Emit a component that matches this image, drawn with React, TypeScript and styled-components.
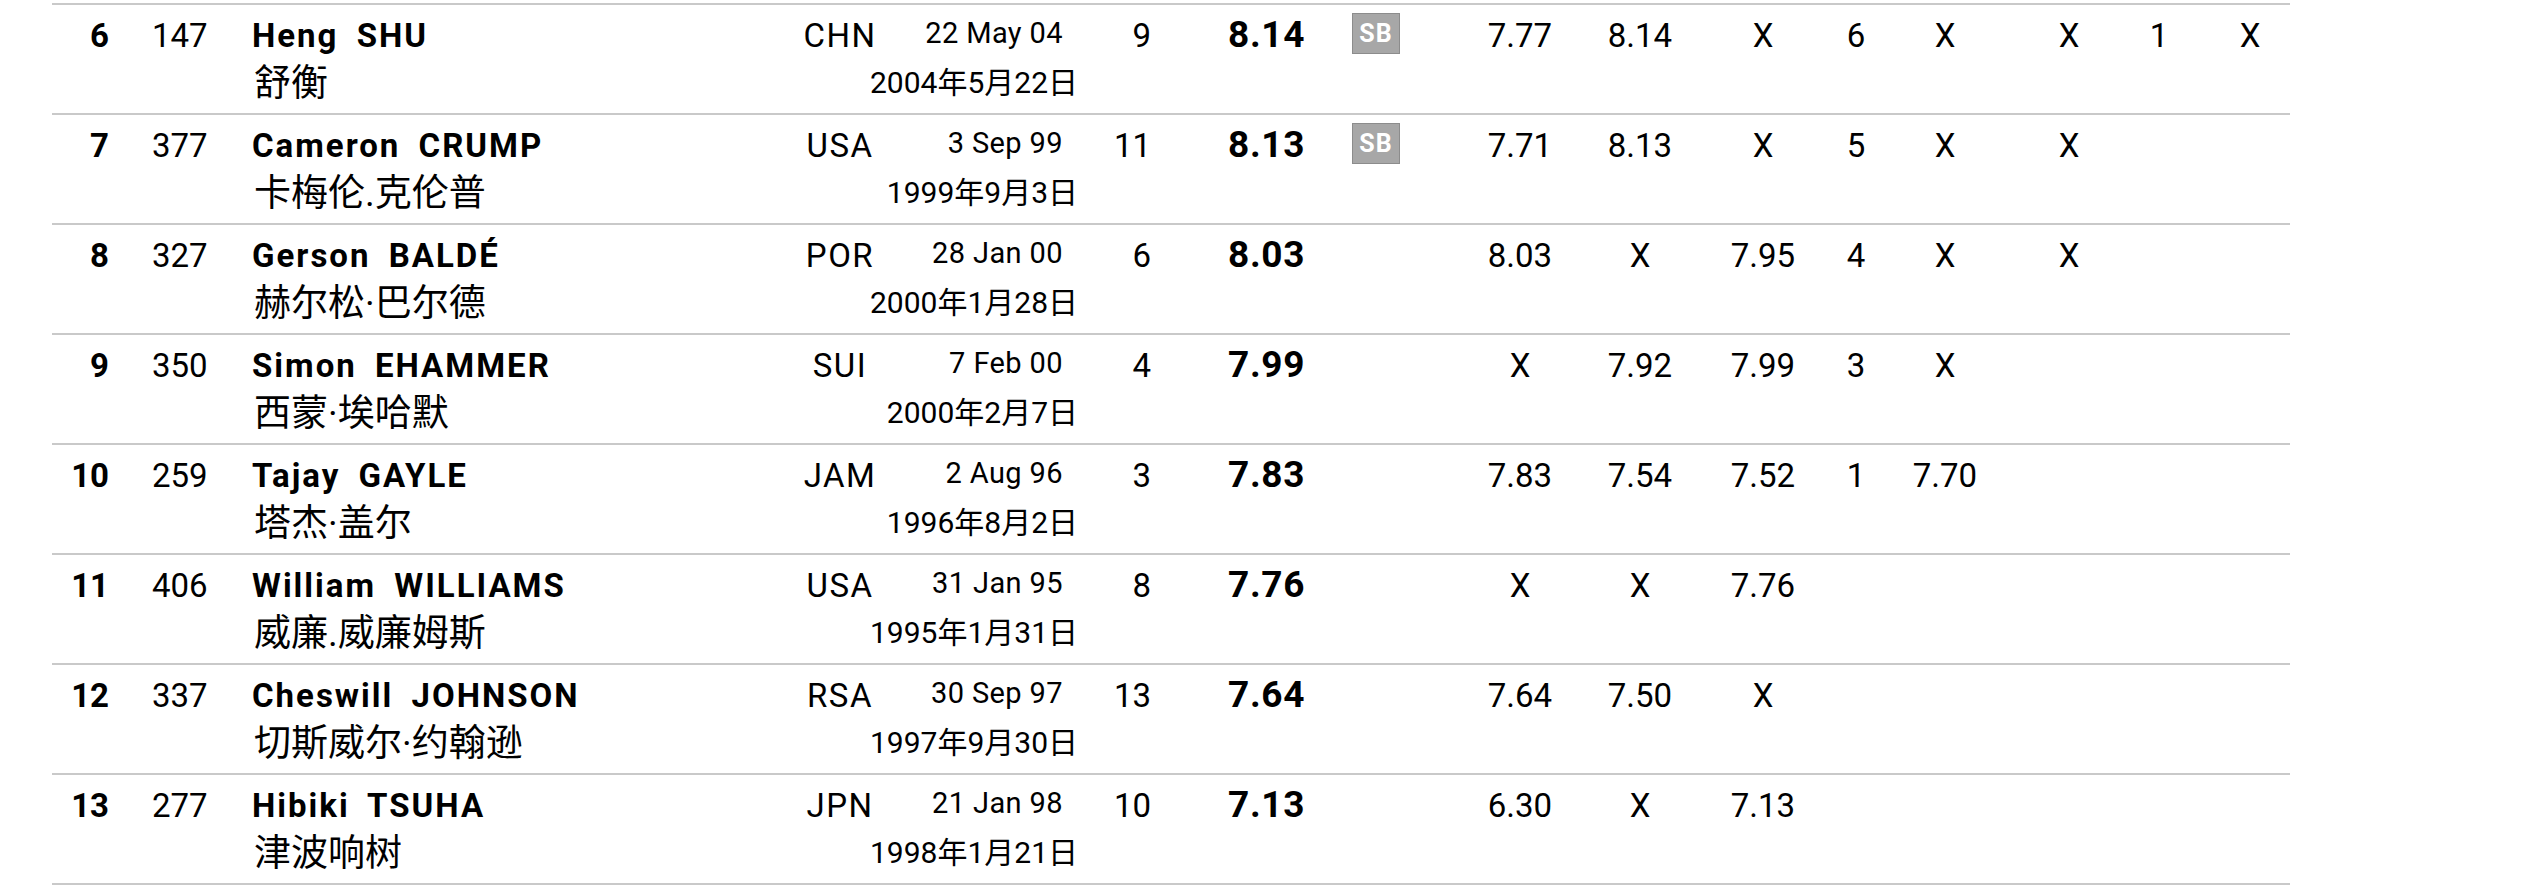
import styled, { createGlobalStyle } from "styled-components";

const GlobalStyle = createGlobalStyle`
  html, body {
    margin: 0;
    padding: 0;
    background: #fff;
  }
  body {
    font-family: Roboto, "Noto Sans CJK SC", sans-serif;
    color: #000;
  }
`;

const Page = styled.div`
  padding: 3px 0 0 52px;
  width: 2238px;
`;

const Table = styled.div`
  border-top: 2px solid #c9c9c9;
`;

const Row = styled.div`
  display: grid;
  grid-template-columns: 78px 122px 508px 158px 182px 82px 170px 108px 120px 120px 126px 60px 118px 130px 50px 106px;
  height: 108px;
  border-bottom: 2px solid #c9c9c9;
  align-items: start;
`;

const Cell = styled.div`
  padding-top: 12px;
  font-size: 33px;
  line-height: 38px;
  white-space: nowrap;
`;

const Rank = styled(Cell)`
  font-weight: 700;
  text-align: right;
  padding-right: 21px;
`;

const Bib = styled(Cell)`
  padding-left: 22px;
`;

const NameCell = styled.div`
  padding-top: 12px;
  display: flex;
  flex-direction: column;
  white-space: nowrap;
`;

const NameEn = styled.div`
  font-size: 33px;
  line-height: 38px;
  font-weight: 700;
  letter-spacing: 2px;
  word-spacing: 8px;
`;

const NameCn = styled.div`
  font-size: 37px;
  line-height: 46px;
  margin-top: 6px;
  padding-left: 2px;
`;

const Country = styled(Cell)`
  text-align: center;
  letter-spacing: 1.5px;
  padding-left: 2px;
`;

const DateCell = styled.div`
  padding-top: 11px;
  display: flex;
  flex-direction: column;
  align-items: flex-end;
  white-space: nowrap;
`;

const DateEn = styled.div`
  font-size: 29px;
  line-height: 34px;
  letter-spacing: 0.4px;
  margin-right: 37px;
`;

const DateCn = styled.div`
  font-size: 30px;
  line-height: 40px;
  margin-top: 13px;
  margin-right: 22px;
`;

const Order = styled(Cell)`
  text-align: right;
  padding-right: 31px;
`;

const Mark = styled(Cell)`
  font-weight: 700;
  font-size: 37px;
  line-height: 42px;
  letter-spacing: 0.7px;
  padding: 9px 0 0 46px;
`;

const Badge = styled.div`
  margin-top: 8px;
  width: 48px;
  height: 41px;
  box-sizing: border-box;
  background: #a7a7a7;
  border: 1px solid #8c8c8c;
  color: #fff;
  font-weight: 700;
  font-size: 25px;
  line-height: 39px;
  text-align: center;
  letter-spacing: 1px;
`;

const Attempt = styled(Cell)<{ $shift?: number }>`
  text-align: center;
  padding-left: ${(p) => p.$shift || 0}px;
`;

type Athlete = {
  rank: number;
  bib: number;
  name: string;
  cn: string;
  country: string;
  dob: string;
  cdob: string;
  order: number;
  mark: string;
  sb?: boolean;
  att: string[];
};

const rows: Athlete[] = [
  { rank: 6, bib: 147, name: "Heng SHU", cn: "舒衡", country: "CHN", dob: "22 May 04", cdob: "2004年5月22日", order: 9, mark: "8.14", sb: true, att: ["7.77", "8.14", "X", "6", "X", "X", "1", "X"] },
  { rank: 7, bib: 377, name: "Cameron CRUMP", cn: "卡梅伦.克伦普", country: "USA", dob: "3 Sep 99", cdob: "1999年9月3日", order: 11, mark: "8.13", sb: true, att: ["7.71", "8.13", "X", "5", "X", "X"] },
  { rank: 8, bib: 327, name: "Gerson BALDÉ", cn: "赫尔松·巴尔德", country: "POR", dob: "28 Jan 00", cdob: "2000年1月28日", order: 6, mark: "8.03", att: ["8.03", "X", "7.95", "4", "X", "X"] },
  { rank: 9, bib: 350, name: "Simon EHAMMER", cn: "西蒙·埃哈默", country: "SUI", dob: "7 Feb 00", cdob: "2000年2月7日", order: 4, mark: "7.99", att: ["X", "7.92", "7.99", "3", "X"] },
  { rank: 10, bib: 259, name: "Tajay GAYLE", cn: "塔杰·盖尔", country: "JAM", dob: "2 Aug 96", cdob: "1996年8月2日", order: 3, mark: "7.83", att: ["7.83", "7.54", "7.52", "1", "7.70"] },
  { rank: 11, bib: 406, name: "William WILLIAMS", cn: "威廉.威廉姆斯", country: "USA", dob: "31 Jan 95", cdob: "1995年1月31日", order: 8, mark: "7.76", att: ["X", "X", "7.76"] },
  { rank: 12, bib: 337, name: "Cheswill JOHNSON", cn: "切斯威尔·约翰逊", country: "RSA", dob: "30 Sep 97", cdob: "1997年9月30日", order: 13, mark: "7.64", att: ["7.64", "7.50", "X"] },
  { rank: 13, bib: 277, name: "Hibiki TSUHA", cn: "津波响树", country: "JPN", dob: "21 Jan 98", cdob: "1998年1月21日", order: 10, mark: "7.13", att: ["6.30", "X", "7.13"] },
];

export default function App() {
  return (
    <Page>
      <GlobalStyle />
      <Table>
        {rows.map((r) => (
          <Row key={r.rank}>
            <Rank>{r.rank}</Rank>
            <Bib>{r.bib}</Bib>
            <NameCell>
              <NameEn>{r.name}</NameEn>
              <NameCn>{r.cn}</NameCn>
            </NameCell>
            <Country>{r.country}</Country>
            <DateCell>
              <DateEn>{r.dob}</DateEn>
              <DateCn>{r.cdob}</DateCn>
            </DateCell>
            <Order>{r.order}</Order>
            <Mark>{r.mark}</Mark>
            <div>{r.sb && <Badge>SB</Badge>}</div>
            {Array.from({ length: 8 }).map((_, i) => (
              <Attempt key={i} $shift={i === 7 ? 26 : 0}>
                {r.att[i] || ""}
              </Attempt>
            ))}
          </Row>
        ))}
      </Table>
    </Page>
  );
}
